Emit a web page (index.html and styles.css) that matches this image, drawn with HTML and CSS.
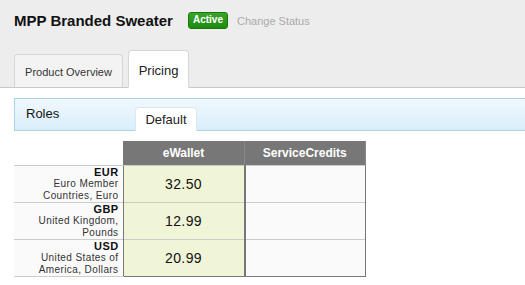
FILE: index.html
```html
<!DOCTYPE html>
<html lang="en">

<head>
    <meta charset="UTF-8">
    <meta name="viewport" content="width=device-width, initial-scale=1.0">
    <title>MPP Branded Sweater - Pricing</title>
    <link rel="stylesheet" href="styles.css">
</head>

<body>
    <!-- Product header -->
    <div class="header">
        <div class="title-row">
            <h1>MPP Branded Sweater</h1>
            <span class="badge">Active</span>
            <a class="change-status" href="#">Change Status</a>
        </div>
        <div class="tabs">
            <a class="tab" href="#">Product Overview</a>
            <a class="tab tab-active" href="#">Pricing</a>
        </div>
    </div>

    <!-- Roles bar -->
    <div class="roles-bar">
        <span class="roles-label">Roles</span>
        <a class="role-tab" href="#">Default</a>
    </div>

    <!-- Price table -->
    <table class="prices">
        <thead>
            <tr>
                <th class="blank"></th>
                <th>eWallet</th>
                <th>ServiceCredits</th>
            </tr>
        </thead>
        <tbody>
            <tr>
                <td class="currency"><b>EUR</b><span>Euro Member Countries, Euro</span></td>
                <td class="wallet">32.50</td>
                <td class="credits"></td>
            </tr>
            <tr>
                <td class="currency"><b>GBP</b><span>United Kingdom, Pounds</span></td>
                <td class="wallet">12.99</td>
                <td class="credits"></td>
            </tr>
            <tr>
                <td class="currency"><b>USD</b><span>United States of America, Dollars</span></td>
                <td class="wallet">20.99</td>
                <td class="credits"></td>
            </tr>
        </tbody>
    </table>
</body>

</html>
```

FILE: styles.css
```css
body {
    font-family: 'Liberation Sans', Arial, sans-serif;
    background-color: #fff;
    margin: 0;
    padding: 0;
    color: #222;
}

.header {
    background-color: #ededed;
    border-bottom: 1px solid #c8c8c8;
    height: 87px;
    display: flex;
    flex-direction: column;
    justify-content: space-between;
}

.title-row {
    display: flex;
    align-items: center;
    padding: 12px 0 0 14px;
}

h1 {
    margin: 0;
    font-size: 15px;
    font-weight: bold;
    color: #111;
}

.badge {
    margin-left: 15px;
    padding: 1px 4px 2px;
    font-size: 10px;
    font-weight: bold;
    color: #fff;
    background: linear-gradient(#3aa52a, #1d8a12);
    border: 1px solid #1b7610;
    border-radius: 3px;
    line-height: 12px;
}

.change-status {
    margin-left: 9px;
    font-size: 11px;
    color: #aaa;
    text-decoration: none;
}

.tabs {
    display: flex;
    align-items: flex-end;
    padding-left: 14px;
    margin-bottom: -1px;
}

.tab {
    display: block;
    box-sizing: border-box;
    width: 109px;
    height: 34px;
    padding-top: 11px;
    text-align: center;
    font-size: 11px;
    color: #333;
    text-decoration: none;
    background-color: #f3f3f3;
    border: 1px solid #d6d6d6;
    border-bottom-color: #c8c8c8;
    border-radius: 4px 4px 0 0;
}

.tab-active {
    width: 61px;
    height: 38px;
    margin-left: 5px;
    padding-top: 12px;
    font-size: 13px;
    color: #222;
    background-color: #fff;
    border-bottom-color: #fff;
}

.roles-bar {
    display: flex;
    align-items: flex-end;
    height: 31px;
    margin: 10px 0 0 14px;
    background: linear-gradient(#f1f8fe, #d8eefb);
    border: 1px solid #a9d3e8;
    border-right: none;
}

.roles-label {
    align-self: flex-start;
    width: 109px;
    margin: 7px 0 0 11px;
    font-size: 13px;
    color: #111;
}

.role-tab {
    display: block;
    box-sizing: border-box;
    width: 62px;
    height: 24px;
    margin-bottom: -1px;
    padding-top: 4px;
    text-align: center;
    font-size: 13px;
    color: #222;
    text-decoration: none;
    background-color: #fff;
    border: 1px solid #dde8ee;
    border-bottom: none;
    border-radius: 4px 4px 0 0;
}

.prices {
    margin: 10px 0 0 14px;
    border-collapse: collapse;
}

.prices th {
    height: 24px;
    padding: 0;
    font-size: 12px;
    font-weight: bold;
    color: #fff;
    background-color: #777;
    border-right: 1px solid #888;
}

.prices th.blank {
    background: none;
    border: none;
    width: 109px;
}

.prices td {
    height: 35px;
    padding: 0;
    border-top: 1px solid #ccc;
}

.currency {
    text-align: right;
    padding-right: 4px !important;
    background-color: #fafafa;
    font-size: 10px;
    line-height: 12px;
    letter-spacing: 0.4px;
    color: #333;
}

.currency b {
    display: block;
    font-size: 11px;
    color: #111;
}

.currency span {
    display: block;
    padding-left: 20px;
}

.wallet {
    width: 120px;
    text-align: center;
    font-size: 14px;
    letter-spacing: 0.4px;
    color: #111;
    background-color: #f1f5d8;
    border-left: 1px solid #777;
    border-right: 2px solid #777;
}

.credits {
    width: 119px;
    background-color: #fafafa;
    border-right: 1px solid #777;
}

.prices tbody tr:last-child .wallet,
.prices tbody tr:last-child .credits {
    border-bottom: 1px solid #777;
}

.prices tbody tr:last-child .currency {
    border-bottom: 1px solid #ccc;
}
```
